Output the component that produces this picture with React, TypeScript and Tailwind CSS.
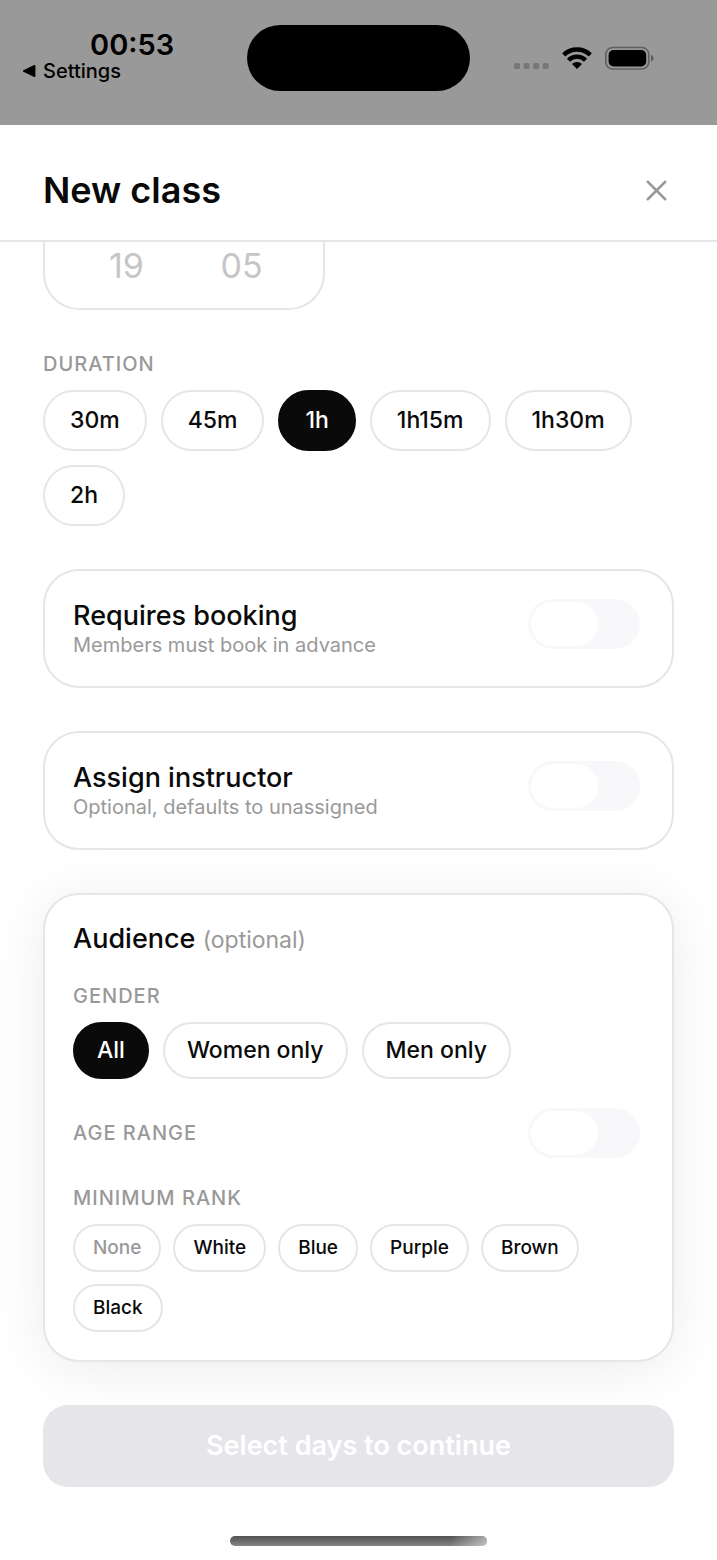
import React, { useState } from 'react';
import { X } from 'lucide-react';
import clsx from 'clsx';

const DURATIONS = ['30m', '45m', '1h', '1h15m', '1h30m', '2h'];
const GENDERS = ['All', 'Women only', 'Men only'];
const RANKS = ['None', 'White', 'Blue', 'Purple', 'Brown', 'Black'];

export default function App() {
  const [duration, setDuration] = useState('1h');
  const [gender, setGender] = useState('All');
  const [rank, setRank] = useState('None');

  return (
    <div className="min-h-screen flex flex-col bg-white text-[#0a0a0a] font-[Inter,sans-serif]">
      <StatusBar />

      {/* Sheet header */}
      <header className="flex items-center justify-between px-[43px] pt-[41px] pb-[26px] border-b-2 border-[#e5e5ea]">
        <h1 className="text-[36px] leading-[48px] font-semibold">New class</h1>
        <button type="button" aria-label="Close" className="text-[#999999]">
          <X size={35} strokeWidth={1.7} />
        </button>
      </header>

      <main className="flex-1 flex flex-col gap-[43px] px-[43px]">
        {/* Time picker, scrolled under the header */}
        <div className="self-start w-[282px] h-[68px] flex justify-center border-2 border-t-0 border-[#e5e5ea] rounded-b-[36px] text-[34px] leading-[48px] text-[#c6c6c6]">
          <button type="button" className="w-[115px] h-[48px]">19</button>
          <button type="button" className="w-[115px] h-[48px]">05</button>
        </div>

        <section className="flex flex-col gap-[14px]">
          <SectionLabel>Duration</SectionLabel>
          <div className="flex flex-wrap gap-[14px]">
            {DURATIONS.map((d) => (
              <Chip key={d} size="lg" selected={d === duration} onClick={() => setDuration(d)}>
                {d}
              </Chip>
            ))}
          </div>
        </section>

        <ToggleCard title="Requires booking" hint="Members must book in advance" />
        <ToggleCard title="Assign instructor" hint="Optional, defaults to unassigned" />

        <section className="flex flex-col gap-[29px] p-[28px] border-2 border-[#e5e5ea] rounded-[36px] bg-white shadow-[0_7px_57px_rgba(0,0,0,0.08)]">
          <h2 className="text-[27px] leading-[32px] font-medium">
            Audience <span className="text-[23px] font-normal text-[#999999]">(optional)</span>
          </h2>

          <div className="flex flex-col gap-[14px]">
            <SectionLabel>Gender</SectionLabel>
            <div className="flex flex-wrap gap-[14px]">
              {GENDERS.map((g) => (
                <Chip key={g} size="md" selected={g === gender} onClick={() => setGender(g)}>
                  {g}
                </Chip>
              ))}
            </div>
          </div>

          <label className="flex items-center justify-between pr-1">
            <SectionLabel>Age range</SectionLabel>
            <Toggle />
          </label>

          <div className="flex flex-col gap-[14px]">
            <SectionLabel>Minimum rank</SectionLabel>
            <div className="flex flex-wrap gap-3">
              {RANKS.map((r) => (
                <Chip key={r} size="sm" muted={r === rank} onClick={() => setRank(r)}>
                  {r}
                </Chip>
              ))}
            </div>
          </div>
        </section>

        <button
          type="button"
          disabled
          className="relative h-[82px] rounded-[25px] bg-[#e5e5ea] text-[27px] font-semibold text-white"
        >
          Select days to continue
        </button>
      </main>

      {/* Home indicator */}
      <div className="flex justify-center pt-12 pb-[14px]">
        <div className="w-[257px] h-[10px] rounded-full bg-linear-to-b from-[#505351] to-[#858585] overflow-hidden">
          <div className="ml-auto w-9 h-full bg-linear-to-r from-transparent to-white/50" />
        </div>
      </div>
    </div>
  );
}

// =============================================================================
// SUB-COMPONENTS
// =============================================================================

function StatusBar() {
  return (
    <div className="grid grid-cols-[1fr_auto_1fr] h-[125px] bg-[#999999] text-black">
      <div className="pt-[29px]">
        <div className="pl-[90px] text-[29px] leading-[32px] font-semibold">00:53</div>
        <a href="#settings" className="flex items-center gap-[7px] pl-[22px] text-[20px] leading-5 font-medium">
          <svg width="14" height="14" viewBox="0 0 14 14" fill="currentColor" aria-hidden="true">
            <path d="M1.4 6.3 12.2 1a.8.8 0 0 1 1.2.7v10.6a.8.8 0 0 1-1.2.7L1.4 7.7a.8.8 0 0 1 0-1.4z" />
          </svg>
          Settings
        </a>
      </div>

      <div className="mt-[25px] w-[223px] h-[66px] rounded-full bg-black" />

      <div className="flex items-start pt-[46px] pl-[44px]">
        {/* Cellular */}
        <svg width="35" height="24" viewBox="0 0 35 24" fill="#777777" aria-hidden="true">
          <rect x="0" y="17" width="6" height="6" rx="1.6" />
          <rect x="9.6" y="17" width="6" height="6" rx="1.6" />
          <rect x="19.2" y="17" width="6" height="6" rx="1.6" />
          <rect x="28.8" y="17" width="6" height="6" rx="1.6" />
        </svg>
        {/* Wifi */}
        <svg className="ml-3" width="32" height="24" viewBox="0 0 32 24" fill="none" stroke="black" aria-hidden="true">
          <path d="M2.7 8.8a19.2 19.2 0 0 1 26.6 0" strokeWidth="4.6" />
          <path d="M7.5 14.2a12 12 0 0 1 17 0" strokeWidth="4.4" />
          <path d="M16 23.1 11 18.1a7 7 0 0 1 10 0z" fill="black" stroke="none" />
        </svg>
        {/* Battery */}
        <svg className="ml-3" width="50" height="24" viewBox="0 0 50 24" aria-hidden="true">
          <rect x="0.8" y="1.5" width="43" height="21.5" rx="7" fill="none" stroke="#606060" strokeWidth="1.6" />
          <rect x="3.6" y="4" width="37.6" height="16.4" rx="5" fill="black" />
          <path d="M46 8.8c1.6.6 2.5 1.9 2.5 3.4s-.9 2.8-2.5 3.4z" fill="#606060" />
        </svg>
      </div>
    </div>
  );
}

function SectionLabel({ children }: { children: React.ReactNode }) {
  return (
    <span className="text-[20px] leading-[23px] font-medium uppercase tracking-[1px] text-[#999999]">
      {children}
    </span>
  );
}

interface ChipProps {
  size: 'sm' | 'md' | 'lg';
  selected?: boolean;
  muted?: boolean;
  onClick: () => void;
  children: React.ReactNode;
}

function Chip({ size, selected, muted, onClick, children }: ChipProps) {
  return (
    <button
      type="button"
      aria-pressed={!!(selected || muted)}
      onClick={onClick}
      className={clsx(
        'border-2 rounded-full font-medium',
        size === 'sm' && 'h-[48px] px-[18px] text-[19px]',
        size === 'md' && 'h-[57px] px-[22px] text-[23px]',
        size === 'lg' && 'h-[61px] px-[25px] text-[23px]',
        selected ? 'bg-[#0a0a0a] border-[#0a0a0a] text-white' : 'bg-white border-[#e5e5ea]',
        muted && 'text-[#999999]'
      )}
    >
      {children}
    </button>
  );
}

function Toggle() {
  return (
    <input
      type="checkbox"
      role="switch"
      className="appearance-none shrink-0 w-[112px] h-[50px] p-[3px] rounded-full bg-[#f8f8fb] checked:bg-[#0a0a0a] before:block before:w-[67px] before:h-[44px] before:rounded-full before:bg-white checked:before:ml-auto"
    />
  );
}

function ToggleCard({ title, hint }: { title: string; hint: string }) {
  return (
    <label className="flex items-start justify-between p-[28px] pr-8 border-2 border-[#e5e5ea] rounded-[36px] bg-white">
      <span className="flex flex-col">
        <span className="text-[27px] leading-[34px] font-medium">{title}</span>
        <span className="text-[20px] leading-[25px] text-[#999999]">{hint}</span>
      </span>
      <Toggle />
    </label>
  );
}
